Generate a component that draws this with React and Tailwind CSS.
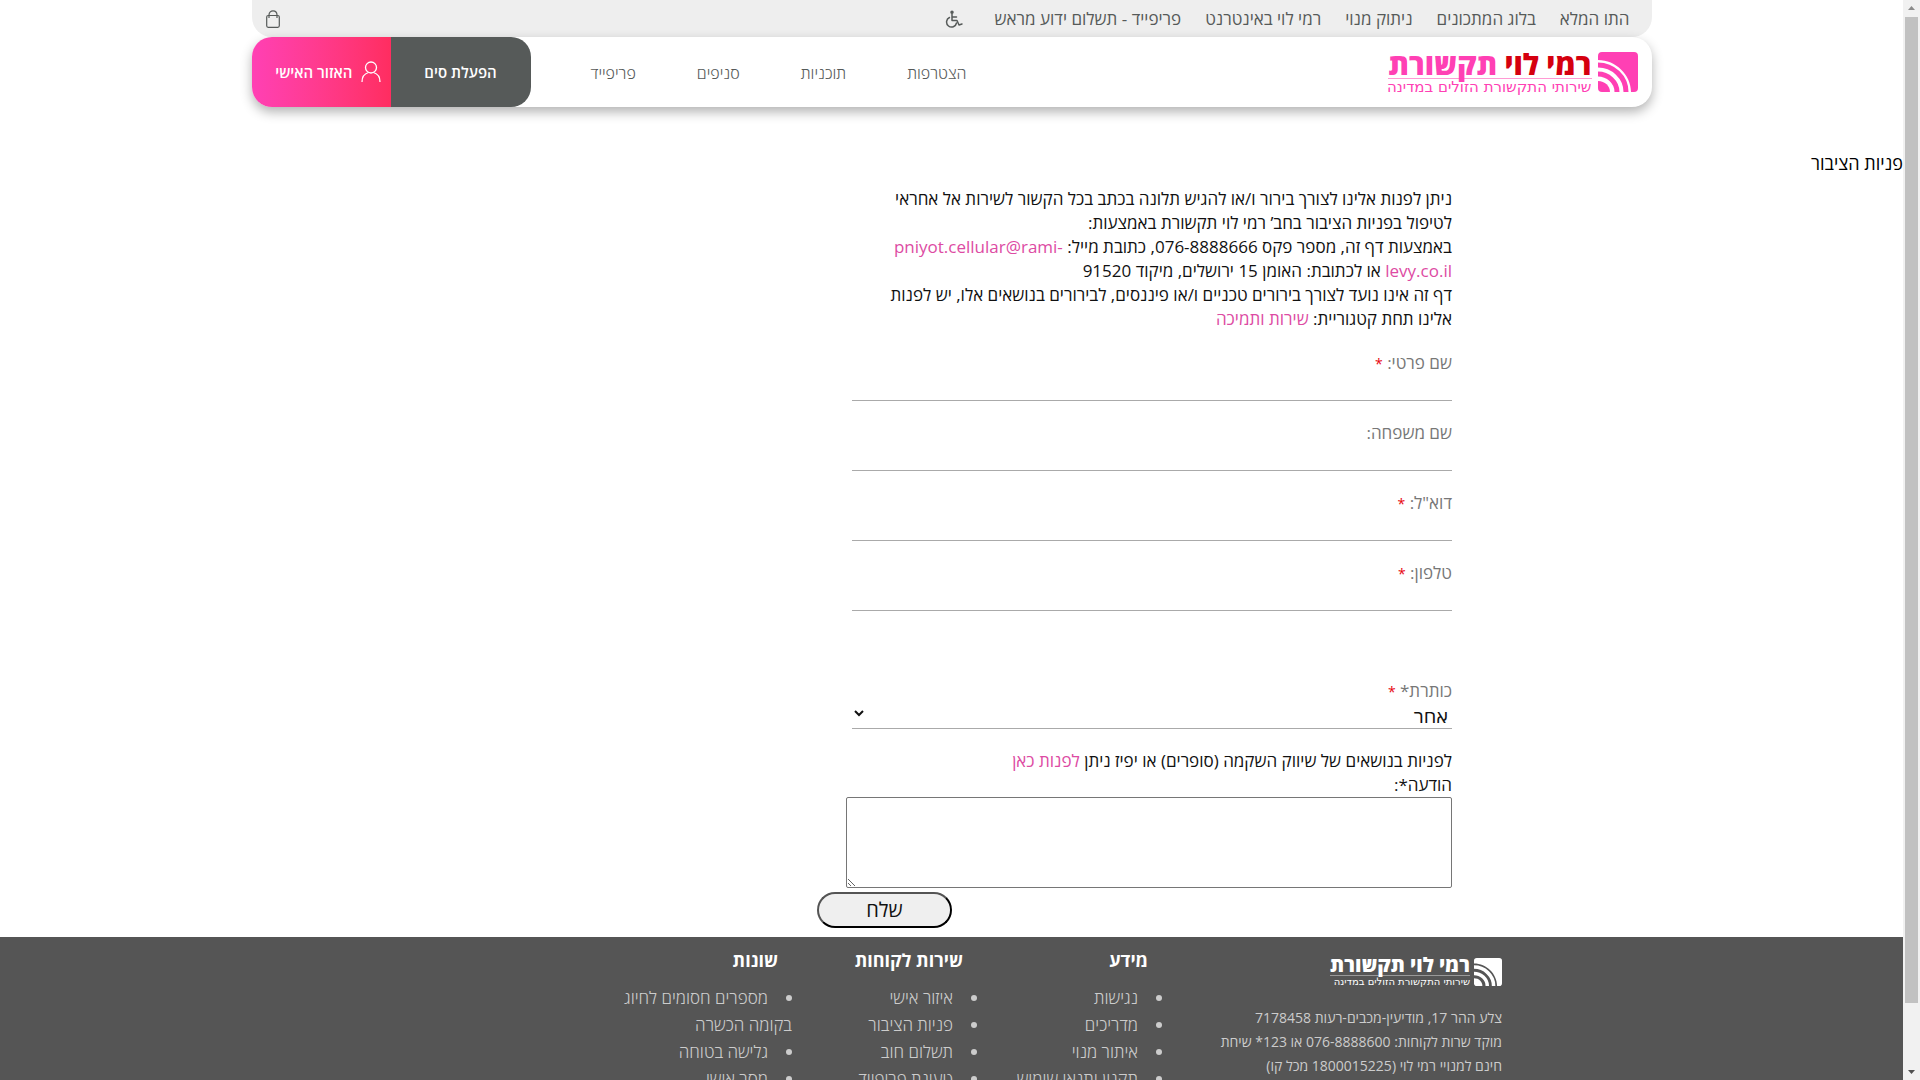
import React from 'react';

const topLinks = ['התו המלא', 'בלוג המתכונים', 'ניתוק מנוי', 'רמי לוי באינטרנט', 'פריפייד - תשלום ידוע מראש'];

const mainLinks = ['הצטרפות', 'תוכניות', 'סניפים', 'פריפייד'];

const fields = [
  { id: 'firstName', label: 'שם פרטי:', type: 'text', required: true },
  { id: 'lastName', label: 'שם משפחה:', type: 'text', required: false },
  { id: 'email', label: 'דוא"ל:', type: 'email', required: true },
  { id: 'phone', label: 'טלפון:', type: 'tel', required: true },
];

const footerColumns = [
  { title: 'מידע', links: ['נגישות', 'מדריכים', 'איתור מנוי', 'תקנון ותנאי שימוש'] },
  { title: 'שירות לקוחות', links: ['איזור אישי', 'פניות הציבור', 'תשלום חוב', 'טעינת פריפייד'] },
  { title: 'שונות', links: ['מספרים חסומים לחיוג בקומה הכשרה', 'גלישה בטוחה', 'מסר אישי'] },
];

const LogoMark = ({ className }) => (
  <svg viewBox="0 0 40 40" className={className} fill="none" aria-hidden="true">
    <path d="M4 0H36Q40 0 40 4V36Q40 40 36 40H33C33 23 18 8 0 8V4Q0 0 4 0Z" fill="currentColor" />
    <path d="M0 13C15 13 28 25 28 40" stroke="currentColor" strokeWidth="5" />
    <path d="M0 22C10 22 19 30 19 40" stroke="currentColor" strokeWidth="5" />
    <path d="M0 29C7 29 12 34 12 40H4Q0 40 0 36Z" fill="currentColor" />
  </svg>
);

const AccessibilityIcon = () => (
  <svg viewBox="0 0 18 18" className="size-[18px]" fill="none" stroke="currentColor" strokeWidth="1.5" strokeLinecap="round" strokeLinejoin="round" aria-hidden="true">
    <circle cx="7" cy="2.200" r="1" fill="currentColor" />
    <path d="M7 4V10.500H12L14 15L17 14M7 7H11.500" />
    <path d="M4.500 7.500A5 5 0 1 0 11.500 13" />
  </svg>
);

const BagIcon = () => (
  <svg viewBox="0 0 14 18" className="h-[18px] w-[14px]" fill="none" stroke="currentColor" strokeWidth="1.2" aria-hidden="true">
    <rect x="0.700" y="5.500" width="12.600" height="11.800" rx="1.500" />
    <path d="M3 8V5C3 -0.500 11 -0.500 11 5V8" />
  </svg>
);

const UserIcon = () => (
  <svg viewBox="0 0 20 22" className="h-[22px] w-5" fill="none" stroke="currentColor" strokeWidth="1.3" aria-hidden="true">
    <circle cx="10" cy="6.500" r="5.500" />
    <path d="M1 21C1 16 4 12.500 7.500 11.500M19 21C19 16 16 12.500 12.500 11.500" />
  </svg>
);

const Header = () => (
  <header className="mx-auto w-full max-w-[1400px] text-[#565a59]">
    <div className="flex h-[37px] items-center rounded-b-[20px] bg-[#eee] px-[22px]">
      <nav className="flex items-center gap-6 text-[17px]">
        {topLinks.map((text) => (
          <a key={text} href="#">{text}</a>
        ))}
        <a href="#" aria-label="נגישות" className="mr-2"><AccessibilityIcon /></a>
      </nav>
      <a href="#" aria-label="סל קניות" className="mr-auto -ml-2"><BagIcon /></a>
    </div>
    <div className="flex h-[70px] items-center rounded-[20px] bg-white shadow-[0_5px_12px_rgba(0,0,0,0.3)]">
      <a href="#" className="mr-3.5 flex items-center gap-1.5">
        <LogoMark className="size-10 text-[#ff40b4]" />
        <span className="flex flex-col items-start text-[#ff40b4]">
          <span className="border-b border-[#ff9ad4] text-[29px] leading-[28px] font-extrabold">
            <span className="text-[#d5000f]">רמי לוי</span> תקשורת
          </span>
          <span className="font-['DejaVu_Sans',sans-serif] text-[15px] leading-4">שירותי התקשורת הזולים במדינה</span>
        </span>
      </a>
      <nav className="mr-auto flex gap-[61px] pt-0.5 pl-[60px] text-base font-light">
        {mainLinks.map((text) => (
          <a key={text} href="#">{text}</a>
        ))}
      </nav>
      <div className="flex h-full text-[15px] font-semibold text-white">
        <a href="#" className="flex w-[140px] items-center justify-center rounded-r-[20px] bg-[#565a59]">הפעלת סים</a>
        <a href="#" className="flex w-[139px] items-center gap-2 rounded-l-[20px] bg-linear-to-r from-[#ff40b4] to-[#ff2d60] pr-2.5">
          <UserIcon />
          האזור האישי
        </a>
      </div>
    </div>
  </header>
);

const ContactForm = () => (
  <form className="flex w-[600px] flex-col text-[17px] leading-6 text-[#111]" onSubmit={(e) => e.preventDefault()}>
    <p>
      ניתן לפנות אלינו לצורך בירור ו/או להגיש תלונה בכתב בכל הקשור לשירות אל אחראי<br />
      לטיפול בפניות הציבור בחב’ רמי לוי תקשורת באמצעות:<br />
      באמצעות דף זה, מספר פקס 076-8888666, כתובת מייל: <a href="#" className="text-[#dd4ba3]">pniyot.cellular@rami-&lrm;<br />levy.co.il</a> או לכתובת: האומן 15 ירושלים, מיקוד 91520<br />
      דף זה אינו נועד לצורך בירורים טכניים ו/או פיננסים, לבירורים בנושאים אלו, יש לפנות<br />
      אלינו תחת קטגוריית: <a href="#" className="text-[#dd4ba3]">שירות ותמיכה</a>
    </p>
    <div className="mt-5 flex flex-col gap-5">
      {fields.map((field) => (
        <div key={field.id} className="flex flex-col">
          <label htmlFor={field.id} className="text-[#777]">
            {field.label} {field.required && <span className="text-sm text-red-600">*</span>}
          </label>
          <input id={field.id} type={field.type} className="h-[26px] border-b border-[#aaa] outline-none" />
        </div>
      ))}
    </div>
    <label htmlFor="subject" className="mt-[68px] text-[#777]">
      כותרת* <span className="text-sm text-red-600">*</span>
    </label>
    <div className="flex h-[26px] items-start border-b border-[#aaa]">
      <select id="subject" className="h-5 w-full bg-white text-xl leading-5 outline-none">
        <option>אחר</option>
      </select>
    </div>
    <p className="mt-5">
      לפניות בנושאים של שיווק השקמה (סופרים) או יפיז ניתן <a href="#" className="text-[#dd4ba3]">לפנות כאן</a>
    </p>
    <label htmlFor="message">הודעה*:</label>
    <textarea id="message" className="-ml-1.5 h-[91px] rounded-xs border border-[#767676]" />
    <button type="submit" className="mt-1 -ml-[35px] h-9 w-[135px] self-end rounded-full border-2 border-black bg-[#efefef] text-xl [border-style:outset]">
      שלח
    </button>
  </form>
);

const Footer = () => (
  <footer className="mt-[9px] flex bg-[#555] pt-2.5 text-[#ccc]">
    <div className="mr-[401px] w-[340px] pt-2">
      <a href="#" className="flex items-center gap-1 text-white">
        <LogoMark className="size-7" />
        <span className="flex flex-col items-start">
          <span className="border-b border-[#999] text-xl leading-5 font-extrabold">רמי לוי תקשורת</span>
          <span className="font-['DejaVu_Sans',sans-serif] text-[10px] leading-3">שירותי התקשורת הזולים במדינה</span>
        </span>
      </a>
      <p className="mt-[18px] text-sm leading-6">
        צלע ההר 17, מודיעין-מכבים-רעות 7178458<br />
        מוקד שרות לקוחות: 076-8888600 או 123* שיחת<br />
        חינם למנויי רמי לוי (1800015225 מכל קו)
      </p>
    </div>
    {footerColumns.map((column) => (
      <div key={column.title} className="w-[185px]">
        <h2 className="mr-[14px] text-lg leading-[26px] font-bold text-white">{column.title}</h2>
        <ul className="mt-[11px] list-inside list-disc text-[17px] leading-[27px] font-light">
          {column.links.map((text) => (
            <li key={text}><a href="#">{text}</a></li>
          ))}
        </ul>
      </div>
    ))}
  </footer>
);

const ScrollBar = () => (
  <div className="flex w-[17px] shrink-0 flex-col items-center bg-[#f1f1f1]" aria-hidden="true">
    <svg viewBox="0 0 17 17" className="size-[17px] fill-[#8b8b8b]"><path d="M5 10L8.500 6L12 10Z" /></svg>
    <div className="h-[986px] w-[13px] bg-[#c1c1c1]" />
    <svg viewBox="0 0 17 17" className="mt-auto size-[17px] fill-[#505050]"><path d="M5 7L8.500 11L12 7Z" /></svg>
  </div>
);

const App = () => (
  <div dir="rtl" className="flex h-screen flex-row-reverse overflow-hidden bg-white font-['Open_Sans','Liberation_Sans',sans-serif]">
    <div className="min-w-0 flex-1 overflow-hidden">
      <Header />
      <main className="pt-10">
        <h1 className="text-lg leading-8">פניות הציבור</h1>
        <div className="mt-2 mr-[451px]">
          <ContactForm />
        </div>
      </main>
      <Footer />
    </div>
    <ScrollBar />
  </div>
);

export default App;
